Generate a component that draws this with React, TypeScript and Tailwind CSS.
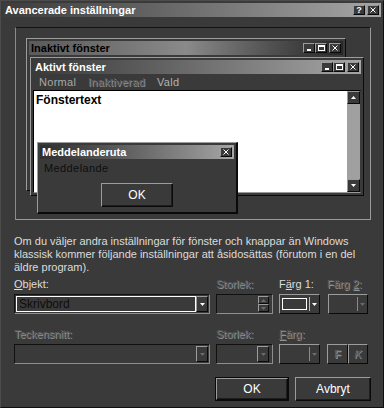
import type { ReactNode } from 'react'

const raised =
  'border border-t-[#9c9c9c] border-l-[#9c9c9c] border-r-[#0a0a0a] border-b-[#0a0a0a]'
const sunken =
  'border border-t-[#101010] border-l-[#101010] border-r-[#8e8e8e] border-b-[#8e8e8e]'
const dimText = 'text-[#5c5c5c] [text-shadow:1px_1px_0_#929292]'

function Arrow({ up, dim }: { up?: boolean; dim?: boolean }) {
  return (
    <svg width="5" height="3" viewBox="0 0 5 3">
      <path d={up ? 'M0 3L2.5 0L5 3Z' : 'M0 0L5 0L2.5 3Z'} fill={dim ? '#6a6a6a' : '#ffffff'} />
    </svg>
  )
}

function CapButton({ kind }: { kind: 'min' | 'max' | 'close' | 'help' }) {
  return (
    <div className={`flex h-[10px] w-[12px] items-center justify-center bg-[#3a3a3a] ${raised}`}>
      {kind === 'min' && <div className="mt-[4px] mr-[1px] h-[2px] w-[4px] bg-white" />}
      {kind === 'max' && <div className="h-[6px] w-[7px] border border-t-2 border-white" />}
      {kind === 'close' && (
        <svg width="6" height="6" viewBox="0 0 6 6">
          <path d="M0.5 0.5L5.5 5.5M5.5 0.5L0.5 5.5" stroke="#ffffff" strokeWidth="1" />
        </svg>
      )}
      {kind === 'help' && <span className="text-[9px] leading-none font-bold text-white">?</span>}
    </div>
  )
}

function ArrowButton({ dim, up }: { dim?: boolean; up?: boolean }) {
  return (
    <div className={`flex w-[12px] shrink-0 items-center justify-center bg-[#3a3a3a] ${raised}`}>
      <Arrow dim={dim} up={up} />
    </div>
  )
}

function Label({ w, dim, children }: { w?: string; dim?: boolean; children: ReactNode }) {
  return <span className={`${w ?? ''} shrink-0 ${dim ? dimText : 'text-[#dcdcdc]'}`}>{children}</span>
}

function ColorButton({ dim, swatch, w }: { dim?: boolean; swatch?: boolean; w: string }) {
  return (
    <div className={`flex h-[20px] ${w} shrink-0 items-center bg-[#3a3a3a] ${raised}`}>
      <div className="flex flex-1 items-center justify-center">
        {swatch && <div className="h-[12px] w-[25px] border border-white bg-[#3a3a3a]" />}
      </div>
      <div className={`h-[14px] w-px ${dim ? 'bg-[#8a8a8a]' : 'bg-[#bdbdbd]'}`} />
      <div className="flex w-[9px] justify-center">
        <Arrow dim={dim} />
      </div>
    </div>
  )
}

function PushButton({ children, w, def }: { children: ReactNode; w: string; def?: boolean }) {
  return (
    <div className={`${w} h-[24px] ${def ? 'border border-[#0a0a0a]' : ''}`}>
      <div
        className={`flex h-full w-full items-center justify-center bg-[#3a3a3a] text-[12px] text-white ${raised} shadow-[inset_-1px_-1px_0_#1e1e1e]`}
      >
        {children}
      </div>
    </div>
  )
}

export default function App() {
  return (
    <div className="h-[408px] w-[384px] overflow-hidden border border-t-[#4c4c4c] border-l-[#4c4c4c] border-r-[#0e0e0e] border-b-[#0e0e0e] bg-[#3a3a3a] p-[2px] font-[Liberation_Sans,Arial,sans-serif] text-[11px] leading-[13px]">
      {/* title bar */}
      <div className="flex h-[14px] items-center bg-gradient-to-r from-[#3c3c3c] to-[#a6a6a6] pr-[2px] pl-[2px]">
        <span className="flex-1 text-[11px] font-bold text-white">Avancerade inställningar</span>
        <div className="flex gap-[2px]">
          <CapButton kind="help" />
          <CapButton kind="close" />
        </div>
      </div>

      {/* preview */}
      <div
        className={`relative mt-[10px] ml-[12px] h-[193px] w-[356px] border border-t-[#121212] border-l-[#8a8a8a] border-r-[#9a9a9a] border-b-[#9a9a9a] bg-[#3a3a3a]`}
      >
        {/* inactive window */}
        <div className={`absolute top-[10px] left-[10px] h-[153px] w-[320px] bg-[#3a3a3a] p-[2px] ${raised}`}>
          <div className="flex h-[14px] items-center bg-gradient-to-r from-[#5a5a5a] via-[#8a8a8a] to-[#262626] pr-[2px] pl-[2px]">
            <span className="flex-1 font-bold text-black">Inaktivt fönster</span>
            <CapButton kind="min" />
            <CapButton kind="max" />
            <div className="w-[2px]" />
            <CapButton kind="close" />
          </div>
        </div>

        {/* active window */}
        <div
          className={`absolute top-[29px] left-[14px] flex h-[139px] w-[334px] flex-col bg-[#3a3a3a] p-[2px] ${raised}`}
        >
          <div className="flex h-[14px] shrink-0 items-center bg-gradient-to-r from-[#3a3a3a] to-[#a6a6a6] pr-[2px] pl-[2px]">
            <span className="flex-1 font-bold text-white">Aktivt fönster</span>
            <CapButton kind="min" />
            <CapButton kind="max" />
            <div className="w-[2px]" />
            <CapButton kind="close" />
          </div>
          <div className="flex h-[16px] shrink-0 items-center pl-[6px] tracking-[0.3px]">
            <span className="w-[49px] text-[#a8a8a8]">Normal</span>
            <span className={`w-[69px] ${dimText}`}>Inaktiverad</span>
            <span className="text-[#b4b4b4]">Vald</span>
          </div>
          <div className="flex min-h-0 flex-1 border border-t-[#000000] border-l-[#000000] border-r-[#3a3a3a] border-b-[#9a9a9a]">
            <div className="flex-1 bg-white pt-[3px] pl-[2px] text-[12px] font-bold text-black">Fönstertext</div>
            <div className="flex w-[13px] flex-col justify-between bg-[#a0a0a0]">
              <div className="flex h-[13px] items-center justify-center bg-[#3a3a3a] border border-t-[#9c9c9c] border-l-[#9c9c9c] border-r-[#0a0a0a] border-b-[#0a0a0a]">
                <Arrow up />
              </div>
              <div className="flex h-[13px] items-center justify-center bg-[#3a3a3a] border border-t-[#9c9c9c] border-l-[#9c9c9c] border-r-[#0a0a0a] border-b-[#0a0a0a]">
                <Arrow />
              </div>
            </div>
          </div>
        </div>

        {/* message box */}
        <div
          className={`absolute top-[114px] left-[21px] flex h-[72px] w-[201px] flex-col bg-[#3a3a3a] p-[2px] ${raised} border-r-2 border-b-2`}
        >
          <div className="flex h-[14px] shrink-0 items-center bg-gradient-to-r from-[#2e2e2e] to-[#a6a6a6] pr-[2px] pl-[2px]">
            <span className="flex-1 font-bold text-white">Meddelanderuta</span>
            <CapButton kind="close" />
          </div>
          <div className="pt-[3px] pl-[4px] tracking-[0.4px] text-[#0e0e0e]">Meddelande</div>
          <div className="mt-[8px] flex justify-center pl-[-2px]">
            <PushButton w="w-[72px]">OK</PushButton>
          </div>
        </div>
      </div>

      {/* explanation */}
      <p className="mt-[15px] ml-[11px] text-[#dcdcdc]">
        Om du väljer andra inställningar för fönster och knappar än Windows
        <br />
        klassisk kommer följande inställningar att åsidosättas (förutom i en del
        <br />
        äldre program).
      </p>

      {/* row 1 */}
      <div className="mt-[4px] ml-[11px] flex">
        <Label w="w-[202px]">
          <span className="underline">O</span>bjekt:
        </Label>
        <Label w="w-[63px]" dim>
          Storlek:
        </Label>
        <Label w="w-[48px]">
          F<span className="underline">ä</span>rg 1:
        </Label>
        <Label dim>
          Färg <span className="underline">2</span>:
        </Label>
      </div>
      <div className="mt-[3px] ml-[11px] flex h-[20px]">
        <div className={`flex w-[196px] shrink-0 p-px ${sunken}`}>
          <div className="flex flex-1 items-center border border-white pl-[2px] text-[12px] text-[#0e0e0e]">
            Skrivbord
          </div>
          <ArrowButton />
        </div>
        <div className={`ml-[6px] flex w-[57px] shrink-0 justify-end p-px pr-[3px] ${sunken}`}>
          <div className="flex flex-col">
            <div className={`flex h-[8px] w-[11px] items-center justify-center ${raised}`}>
              <Arrow up dim />
            </div>
            <div className={`flex h-[8px] w-[11px] items-center justify-center ${raised}`}>
              <Arrow dim />
            </div>
          </div>
        </div>
        <div className="ml-[6px]">
          <ColorButton w="w-[41px]" swatch />
        </div>
        <div className="ml-[8px]">
          <ColorButton w="w-[40px]" dim />
        </div>
      </div>

      {/* row 2 */}
      <div className="mt-[14px] ml-[11px] flex">
        <Label w="w-[202px]" dim>
          Teckensnitt:
        </Label>
        <Label w="w-[63px]" dim>
          Storlek:
        </Label>
        <Label dim>
          <span className="underline">F</span>ärg:
        </Label>
      </div>
      <div className="mt-[3px] ml-[11px] flex h-[20px]">
        <div className={`flex w-[196px] shrink-0 justify-end p-px ${sunken}`}>
          <ArrowButton dim />
        </div>
        <div className={`ml-[6px] flex w-[57px] shrink-0 justify-end p-px pr-[3px] ${sunken}`}>
          <ArrowButton dim />
        </div>
        <div className="ml-[6px]">
          <ColorButton w="w-[41px]" dim />
        </div>
        <div className={`ml-[7px] flex h-[20px] w-[21px] items-center justify-center bg-[#3a3a3a] font-bold ${raised} ${dimText}`}>
          F
        </div>
        <div className={`flex h-[20px] w-[20px] items-center justify-center bg-[#3a3a3a] italic ${raised} ${dimText}`}>
          K
        </div>
      </div>

      {/* buttons */}
      <div className="mt-[13px] mr-[10px] flex justify-end gap-[6px]">
        <PushButton w="w-[74px]" def>
          OK
        </PushButton>
        <PushButton w="w-[76px]">Avbryt</PushButton>
      </div>
    </div>
  )
}
